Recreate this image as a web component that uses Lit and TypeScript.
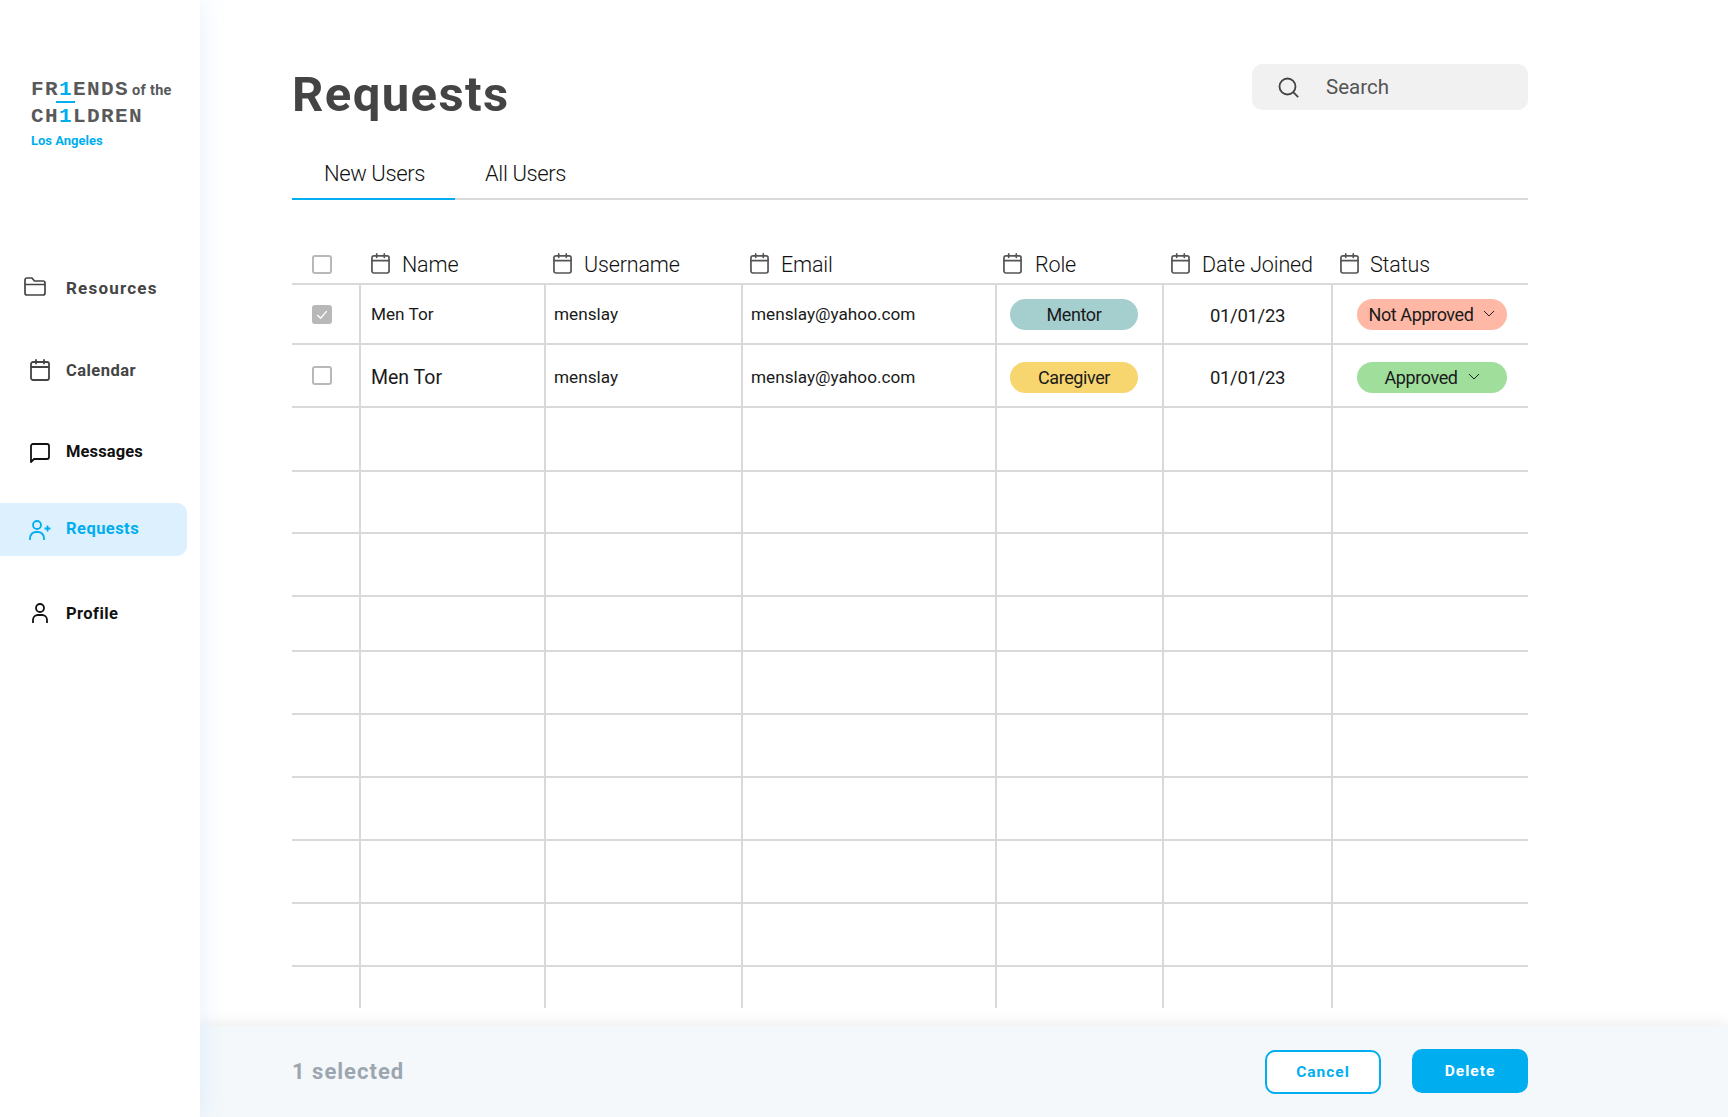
import { LitElement, css, html, svg } from 'lit'
import { customElement } from 'lit/decorators.js'

const calendarIcon = html`<svg class="cal" viewBox="0 0 20 22" fill="none" stroke="currentColor" stroke-width="1.8" stroke-linecap="round"><rect x="1" y="3" width="18" height="18" rx="2"/><path d="M1 8h18M6 .9v3.6M14 .9v3.6"/></svg>`
const chevron = html`<svg class="chev" viewBox="0 0 12 7" fill="none" stroke="#222" stroke-width="1"><path d="M1 1l5 5 5-5"/></svg>`

const columns = [
  { label: 'Name', cls: 'h-name' },
  { label: 'Username', cls: '' },
  { label: 'Email', cls: '' },
  { label: 'Role', cls: 'h-tight' },
  { label: 'Date Joined', cls: '' },
  { label: 'Status', cls: 'h-status' },
]

const navItems = [
  { label: 'Resources', cls: 'dark wide', icon: html`<svg class="i-folder" viewBox="0 0 22 19" fill="none" stroke="currentColor" stroke-width="1.7" stroke-linejoin="round"><path d="M1 3a2 2 0 0 1 2-2h5l2.5 3H19a2 2 0 0 1 2 2v10a2 2 0 0 1-2 2H3a2 2 0 0 1-2-2ZM1 7.5h20"/></svg>` },
  { label: 'Calendar', cls: 'dark', icon: html`<svg class="i-cal" viewBox="0 0 20 22" fill="none" stroke="currentColor" stroke-width="1.8" stroke-linecap="round"><rect x="1" y="3" width="18" height="18" rx="2"/><path d="M1 8h18M6 .9v3.6M14 .9v3.6"/></svg>` },
  { label: 'Messages', cls: 'tight', icon: html`<svg class="i-msg" viewBox="0 0 20 20" fill="none" stroke="currentColor" stroke-width="1.8" stroke-linejoin="round"><path d="M1 19V3a2 2 0 0 1 2-2h14a2 2 0 0 1 2 2v11a2 2 0 0 1-2 2H4Z"/></svg>` },
  { label: 'Requests', cls: 'active', icon: html`<svg class="i-add" viewBox="0 0 22 20" fill="none" stroke="currentColor" stroke-width="1.8"><circle cx="8" cy="5" r="4"/><path d="M1 20v-2a6 6 0 0 1 6-6h2a6 6 0 0 1 6 6v2M15.5 8.5h6M18.5 5.5v6"/></svg>` },
  { label: 'Profile', cls: '', icon: html`<svg class="i-user" viewBox="0 0 16 20" fill="none" stroke="currentColor" stroke-width="1.8"><circle cx="8" cy="5" r="4"/><path d="M1 20v-3a5 5 0 0 1 5-5h4a5 5 0 0 1 5 5v3"/></svg>` },
]

const checkMark = svg`<path d="M5 10.5l3.5 3.5L15 6.5" fill="none" stroke="#fff" stroke-width="1.4"/>`

@customElement('app-root')
export class AppRoot extends LitElement {
  static styles = css`
    :host {
      display: flex;
      width: 100%;
      height: 100vh;
      overflow: hidden;
      background: #fff;
      font-family: Roboto, 'Liberation Sans', sans-serif;
      color: #1a1a1a;
    }

    /* sidebar */
    .sidebar {
      position: relative;
      z-index: 2;
      width: 200px;
      flex: none;
      background: #fff;
      box-shadow: 0 0 26px rgba(40, 140, 255, 0.12);
      clip-path: inset(0 -40px 0 0);
    }
    .logo {
      padding: 77px 0 0 31px;
      height: 185px;
      box-sizing: border-box;
      color: #58595b;
      font-weight: 700;
    }
    .logo-line {
      font-family: 'Liberation Mono', monospace;
      font-size: 21px;
      letter-spacing: 1.4px;
      line-height: 26px;
      white-space: nowrap;
    }
    .logo-line b { color: #00aeef; position: relative; font-weight: 700; }
    .logo-line .bar::after {
      content: '';
      position: absolute;
      left: -3px;
      top: 23px;
      width: 19px;
      height: 2px;
      background: #00aeef;
    }
    .logo-of {
      font-family: Roboto, sans-serif;
      font-size: 14.5px;
      letter-spacing: 0.3px;
      margin-left: 3px;
    }
    .logo-city {
      color: #00aeef;
      font-size: 13px;
      line-height: 18px;
      margin-top: 2px;
    }
    nav { display: flex; flex-direction: column; padding-top: 78px; }
    .nav-item {
      display: flex;
      align-items: center;
      height: 53px;
      width: 187px;
      box-sizing: border-box;
      font-size: 16.5px;
      font-weight: 700;
      letter-spacing: 0.45px;
      color: #111;
      border-radius: 0 10px 10px 0;
      margin-bottom: 28px;
    }
    .nav-item.dark { color: #444; }
    .nav-item.wide { font-size: 17px; letter-spacing: 1.2px; margin-bottom: 29px; }
    .nav-item.tight { letter-spacing: 0.1px; margin-bottom: 24px; }
    .nav-item.active { background: #dcf0fe; color: #00aeef; margin-bottom: 32px; }
    .nav-item span { padding-bottom: 3px; }
    .nav-icon { width: 66px; flex: none; display: flex; }
    .i-folder { width: 22px; height: 19px; margin: 0 0 6px 24px; }
    .i-cal { width: 20px; height: 22px; margin: 0 0 4px 30px; }
    .i-msg { width: 20px; height: 20px; margin-left: 30px; }
    .i-add { width: 22px; height: 20px; margin-left: 29px; }
    .i-user { width: 16px; height: 20px; margin: 0 0 3px 32px; }

    /* main column */
    .main { flex: 1; display: flex; flex-direction: column; min-width: 0; }
    .content { flex: 1; padding: 64px 200px 0 92px; }
    .top { display: flex; justify-content: space-between; height: 46px; }
    h1 {
      margin: 0;
      font-size: 49px;
      line-height: 62px;
      font-weight: 700;
      letter-spacing: 1.4px;
      color: #444;
    }
    .search {
      width: 276px;
      height: 46px;
      box-sizing: border-box;
      padding-left: 26px;
      display: flex;
      align-items: center;
      gap: 26px;
      background: #f1f1f1;
      border-radius: 10px;
      font-size: 20.5px;
      color: #555;
    }
    .search svg { width: 22px; height: 21px; }

    .tabs {
      margin-top: 45px;
      height: 45px;
      box-sizing: border-box;
      display: flex;
      border-bottom: 2px solid #d9d9d9;
      font-size: 22px;
      font-weight: 300;
      letter-spacing: -0.4px;
      color: #111;
    }
    .tab { height: 45px; box-sizing: border-box; padding: 0 30px 0 30px; line-height: 38px; }
    .tab.on { width: 163px; padding: 0 0 0 32px; border-bottom: 2px solid #00aeef; }

    /* table */
    .table {
      margin-top: 41px;
      display: grid;
      grid-template-columns: 69px 185px 197px 254px 167px 169px 195px;
      grid-template-rows: 44px 60px 63px 64px 62px 63px 55px 63px 63px 63px 63px 63px 41px;
    }
    .th {
      display: flex;
      align-items: center;
      gap: 12px;
      padding: 2px 0 0 7px;
      border-bottom: 2px solid #d9d9d9;
      font-size: 21.5px;
      font-weight: 300;
      letter-spacing: -0.15px;
      color: #111;
      min-width: 0;
      white-space: nowrap;
    }
    .th.h-name { padding-left: 10px; }
    .th.h-tight { padding-left: 6px; gap: 13px; }
    .th.h-status { gap: 11px; }
    .th span { margin-top: 2px; }
    .cal { width: 19px; height: 21px; flex: none; color: #555; }
    .td {
      display: flex;
      align-items: center;
      box-sizing: border-box;
      padding-left: 8px;
      border-right: 2px solid #d9d9d9;
      border-bottom: 2px solid #d9d9d9;
      font-size: 17.2px;
      min-width: 0;
      white-space: nowrap;
    }
    .td.last { border-right: 0; }
    .td.end { border-bottom: 0; }
    .td.check, .th.check { padding: 0 0 0 20px; }
    .td.name { padding-left: 10px; }
    .td.big { font-size: 19.5px; padding-top: 3px; }
    .td.low { padding-top: 3px; }
    .td.date {
      justify-content: center;
      padding: 4px 0 0;
      font-size: 18.5px;
      letter-spacing: -0.3px;
    }
    .box {
      width: 20px;
      height: 19px;
      flex: none;
      box-sizing: border-box;
      border: 2px solid #b8b8b8;
      border-radius: 3px;
      background: #fff;
    }
    .box.on { background: #b8b8b8; margin-top: 1px; }
    .box svg { display: block; margin: -2px; width: 20px; height: 19px; }
    .box.up { margin-top: -1px; }
    .th .box { margin-top: 5px; }
    .pill {
      height: 31px;
      margin-top: 1px;
      border-radius: 16px;
      display: flex;
      align-items: center;
      justify-content: center;
      font-size: 18px;
      letter-spacing: -0.4px;
    }
    .pill.down { margin-top: 4px; }
    .role { padding-left: 13px; }
    .role .pill { width: 128px; }
    .state { padding-left: 24px; }
    .state .pill { width: 150px; gap: 10px; }
    .mentor { background: #a5cfcf; }
    .caregiver { background: #f8d66f; }
    .denied { background: #ffb8a5; }
    .approved { background: #a0de9c; }
    .chev { width: 12px; height: 7px; margin-bottom: 3px; }

    /* footer */
    .footer {
      height: 91px;
      flex: none;
      display: flex;
      align-items: center;
      padding: 0 200px 0 92px;
      background: #f4f8fa;
      box-shadow: 0 -3px 14px rgba(0, 0, 0, 0.07);
    }
    .count { flex: 1; font-size: 22px; font-weight: 700; letter-spacing: 1px; color: #9ca6b0; }
    .btn {
      width: 116px;
      height: 44px;
      box-sizing: border-box;
      border-radius: 10px;
      display: flex;
      align-items: center;
      justify-content: center;
      font-size: 15.5px;
      font-weight: 700;
      letter-spacing: 1px;
      color: #00aeef;
      border: 2px solid #00aeef;
      background: #fff;
      margin-top: 1px;
    }
    .btn.solid { background: #00aeef; color: #fff; margin: -1px 0 0 31px; }
  `

  private renderRow(name: string, big: boolean, role: string, roleCls: string, status: string, statusCls: string, checked: boolean) {
    const pillPos = big ? 'down' : ''
    return html`
      <div class="td check"><div class="box ${checked ? 'on' : 'up'}">${checked ? html`<svg viewBox="0 0 20 20">${checkMark}</svg>` : ''}</div></div>
      <div class="td name ${big ? 'big' : ''}">${name}</div>
      <div class="td ${big ? 'low' : ''}">menslay</div>
      <div class="td ${big ? 'low' : ''}">menslay@yahoo.com</div>
      <div class="td role"><div class="pill ${pillPos} ${roleCls}">${role}</div></div>
      <div class="td date">01/01/23</div>
      <div class="td last state"><div class="pill ${pillPos} ${statusCls}">${status}${chevron}</div></div>
    `
  }

  protected render() {
    const emptyRows = Array.from({ length: 10 }, (_, r) => r)
    return html`
      <aside class="sidebar">
        <div class="logo">
          <div class="logo-line">FR<b class="bar">1</b>ENDS<span class="logo-of">of the</span></div>
          <div class="logo-line">CH<b>1</b>LDREN</div>
          <div class="logo-city">Los Angeles</div>
        </div>
        <nav>
          ${navItems.map(n => html`<div class="nav-item ${n.cls}"><div class="nav-icon">${n.icon}</div><span>${n.label}</span></div>`)}
        </nav>
      </aside>
      <div class="main">
        <div class="content">
          <div class="top">
            <h1>Requests</h1>
            <div class="search">
              <svg viewBox="0 0 22 21" fill="none" stroke="#444" stroke-width="1.8"><circle cx="9.5" cy="9.5" r="8"/><path d="M15.2 15.2l5 5"/></svg>
              Search
            </div>
          </div>
          <div class="tabs">
            <div class="tab on">New Users</div>
            <div class="tab">All Users</div>
          </div>
          <div class="table">
            <div class="th check"><div class="box"></div></div>
            ${columns.map(c => html`<div class="th ${c.cls}">${calendarIcon}<span>${c.label}</span></div>`)}
            ${this.renderRow('Men Tor', false, 'Mentor', 'mentor', 'Not Approved', 'denied', true)}
            ${this.renderRow('Men Tor', true, 'Caregiver', 'caregiver', 'Approved', 'approved', false)}
            ${emptyRows.map(r => Array.from({ length: 7 }, (_, c) => html`<div class="td ${c === 6 ? 'last' : ''} ${r === 9 ? 'end' : ''}"></div>`))}
          </div>
        </div>
        <div class="footer">
          <div class="count">1 selected</div>
          <div class="btn">Cancel</div>
          <div class="btn solid">Delete</div>
        </div>
      </div>
    `
  }
}

declare global {
  interface HTMLElementTagNameMap {
    'app-root': AppRoot
  }
}
